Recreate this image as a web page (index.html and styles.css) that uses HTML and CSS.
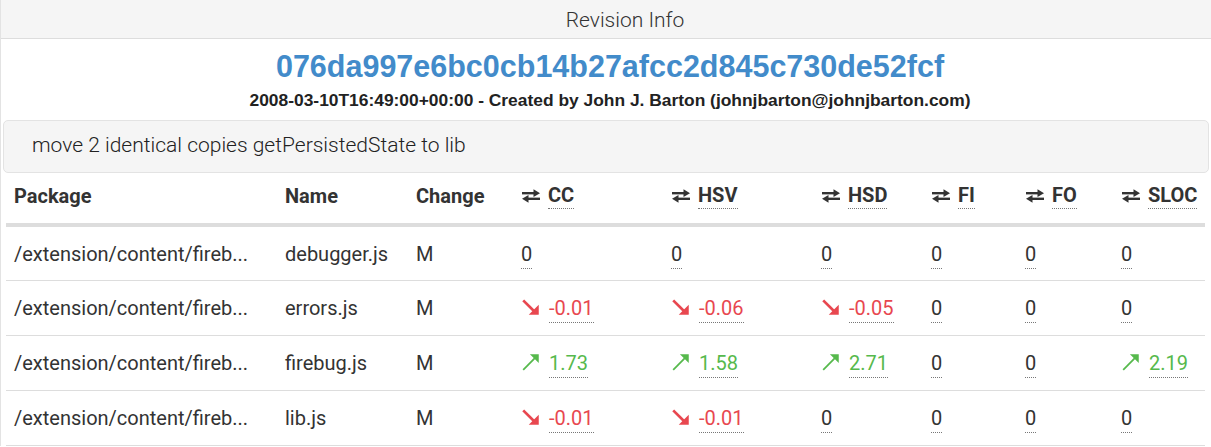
FILE: index.html
```html
<!DOCTYPE html>
<html>
<head>
<meta charset="utf-8">
<link rel="stylesheet" href="styles.css">
</head>
<body>
<div class="panel">
  <div class="panel-heading">Revision Info</div>
  <div class="panel-body">
    <h1 class="hash">076da997e6bc0cb14b27afcc2d845c730de52fcf</h1>
    <div class="meta">2008-03-10T16:49:00+00:00 - Created by John J. Barton (johnjbarton@johnjbarton.com)</div>
    <div class="well">move 2 identical copies getPersistedState to lib</div>
    <table class="files">
      <colgroup>
        <col class="c-pkg"><col class="c-name"><col class="c-chg"><col class="c-cc"><col class="c-hsv"><col class="c-hsd"><col class="c-fi"><col class="c-fo"><col class="c-sloc">
      </colgroup>
      <thead>
        <tr>
          <th>Package</th><th>Name</th><th>Change</th>
          <th><span class="sort"><svg class="xfer" viewBox="0 0 20 14" width="20" height="14"><path d="M1 4.2h13" stroke="#333" stroke-width="2.4"/><path d="M12.5 0.3l6.5 3.9-6.5 3.9z" fill="#333"/><path d="M19 9.8H6" stroke="#333" stroke-width="2.4"/><path d="M7.5 5.9l-6.5 3.9 6.5 3.9z" fill="#333"/></svg><abbr>CC</abbr></span></th>
          <th><span class="sort"><svg class="xfer" viewBox="0 0 20 14" width="20" height="14"><path d="M1 4.2h13" stroke="#333" stroke-width="2.4"/><path d="M12.5 0.3l6.5 3.9-6.5 3.9z" fill="#333"/><path d="M19 9.8H6" stroke="#333" stroke-width="2.4"/><path d="M7.5 5.9l-6.5 3.9 6.5 3.9z" fill="#333"/></svg><abbr>HSV</abbr></span></th>
          <th><span class="sort"><svg class="xfer" viewBox="0 0 20 14" width="20" height="14"><path d="M1 4.2h13" stroke="#333" stroke-width="2.4"/><path d="M12.5 0.3l6.5 3.9-6.5 3.9z" fill="#333"/><path d="M19 9.8H6" stroke="#333" stroke-width="2.4"/><path d="M7.5 5.9l-6.5 3.9 6.5 3.9z" fill="#333"/></svg><abbr>HSD</abbr></span></th>
          <th><span class="sort"><svg class="xfer" viewBox="0 0 20 14" width="20" height="14"><path d="M1 4.2h13" stroke="#333" stroke-width="2.4"/><path d="M12.5 0.3l6.5 3.9-6.5 3.9z" fill="#333"/><path d="M19 9.8H6" stroke="#333" stroke-width="2.4"/><path d="M7.5 5.9l-6.5 3.9 6.5 3.9z" fill="#333"/></svg><abbr>FI</abbr></span></th>
          <th><span class="sort"><svg class="xfer" viewBox="0 0 20 14" width="20" height="14"><path d="M1 4.2h13" stroke="#333" stroke-width="2.4"/><path d="M12.5 0.3l6.5 3.9-6.5 3.9z" fill="#333"/><path d="M19 9.8H6" stroke="#333" stroke-width="2.4"/><path d="M7.5 5.9l-6.5 3.9 6.5 3.9z" fill="#333"/></svg><abbr>FO</abbr></span></th>
          <th><span class="sort"><svg class="xfer" viewBox="0 0 20 14" width="20" height="14"><path d="M1 4.2h13" stroke="#333" stroke-width="2.4"/><path d="M12.5 0.3l6.5 3.9-6.5 3.9z" fill="#333"/><path d="M19 9.8H6" stroke="#333" stroke-width="2.4"/><path d="M7.5 5.9l-6.5 3.9 6.5 3.9z" fill="#333"/></svg><abbr>SLOC</abbr></span></th>
        </tr>
      </thead>
      <tbody>
        <tr>
          <td>/extension/content/fireb...</td><td>debugger.js</td><td>M</td>
          <td><abbr>0</abbr></td><td><abbr>0</abbr></td><td><abbr>0</abbr></td><td><abbr>0</abbr></td><td><abbr>0</abbr></td><td><abbr>0</abbr></td>
        </tr>
        <tr>
          <td>/extension/content/fireb...</td><td>errors.js</td><td>M</td>
          <td class="down"><svg class="trend" viewBox="0 0 18 18" width="18" height="18"><path d="M2 3L13 14" stroke="currentColor" stroke-width="2.4"/><path d="M16 7v9H7z" fill="currentColor"/></svg><abbr>-0.01</abbr></td>
          <td class="down"><svg class="trend" viewBox="0 0 18 18" width="18" height="18"><path d="M2 3L13 14" stroke="currentColor" stroke-width="2.4"/><path d="M16 7v9H7z" fill="currentColor"/></svg><abbr>-0.06</abbr></td>
          <td class="down"><svg class="trend" viewBox="0 0 18 18" width="18" height="18"><path d="M2 3L13 14" stroke="currentColor" stroke-width="2.4"/><path d="M16 7v9H7z" fill="currentColor"/></svg><abbr>-0.05</abbr></td>
          <td><abbr>0</abbr></td><td><abbr>0</abbr></td><td><abbr>0</abbr></td>
        </tr>
        <tr>
          <td>/extension/content/fireb...</td><td>firebug.js</td><td>M</td>
          <td class="up"><svg class="trend" viewBox="0 0 18 18" width="18" height="18"><path d="M2 16L14 4" stroke="currentColor" stroke-width="1.6"/><path d="M8 2h8v8z" fill="currentColor"/></svg><abbr>1.73</abbr></td>
          <td class="up"><svg class="trend" viewBox="0 0 18 18" width="18" height="18"><path d="M2 16L14 4" stroke="currentColor" stroke-width="1.6"/><path d="M8 2h8v8z" fill="currentColor"/></svg><abbr>1.58</abbr></td>
          <td class="up"><svg class="trend" viewBox="0 0 18 18" width="18" height="18"><path d="M2 16L14 4" stroke="currentColor" stroke-width="1.6"/><path d="M8 2h8v8z" fill="currentColor"/></svg><abbr>2.71</abbr></td>
          <td><abbr>0</abbr></td><td><abbr>0</abbr></td>
          <td class="up"><svg class="trend" viewBox="0 0 18 18" width="18" height="18"><path d="M2 16L14 4" stroke="currentColor" stroke-width="1.6"/><path d="M8 2h8v8z" fill="currentColor"/></svg><abbr>2.19</abbr></td>
        </tr>
        <tr>
          <td>/extension/content/fireb...</td><td>lib.js</td><td>M</td>
          <td class="down"><svg class="trend" viewBox="0 0 18 18" width="18" height="18"><path d="M2 3L13 14" stroke="currentColor" stroke-width="2.4"/><path d="M16 7v9H7z" fill="currentColor"/></svg><abbr>-0.01</abbr></td>
          <td class="down"><svg class="trend" viewBox="0 0 18 18" width="18" height="18"><path d="M2 3L13 14" stroke="currentColor" stroke-width="2.4"/><path d="M16 7v9H7z" fill="currentColor"/></svg><abbr>-0.01</abbr></td>
          <td><abbr>0</abbr></td><td><abbr>0</abbr></td><td><abbr>0</abbr></td><td><abbr>0</abbr></td>
        </tr>
      </tbody>
    </table>
  </div>
</div>
</body>
</html>
```

FILE: styles.css
```css
* { box-sizing: border-box; }
html, body { margin: 0; padding: 0; background: #fff; }
body {
  font-family: Roboto, "Liberation Sans", sans-serif;
  color: #333;
  width: 1211px;
  overflow: hidden;
}
.panel { border-left: 1px solid #e3e3e3; }
.panel-heading {
  height: 39px;
  background: #f5f5f5;
  border-bottom: 1px solid #ddd;
  text-align: center;
  padding-left: 38px;
  font-size: 21px;
  font-weight: 300;
  line-height: 41px;
  color: #333;
}
.panel-body { padding: 0 2px; }
.hash {
  margin: 10px 0 0;
  padding-left: 8px;
  text-align: center;
  font-family: "Liberation Sans", Arial, sans-serif;
  font-weight: bold;
  font-size: 30.5px;
  line-height: 34px;
  color: #428bca;
}
.meta {
  text-align: center;
  padding-left: 8px;
  font-family: "Liberation Sans", Arial, sans-serif;
  font-weight: bold;
  font-size: 17.4px;
  line-height: 20px;
  margin-top: 7px;
  color: #222;
}
.well {
  margin-top: 10px;
  height: 53px;
  background: #f5f5f5;
  border: 1px solid #e3e3e3;
  border-radius: 5px;
  padding-left: 28px;
  font-size: 21px;
  font-weight: 300;
  line-height: 49px;
  color: #222;
}
.files {
  margin-left: 3px;
  border-collapse: collapse;
  table-layout: fixed;
  width: 1199px;
}
.c-pkg { width: 271px; }
.c-name { width: 131px; }
.c-chg { width: 105px; }
.c-cc { width: 150px; }
.c-hsv { width: 150px; }
.c-hsd { width: 110px; }
.c-fi { width: 94px; }
.c-fo { width: 96px; }
.c-sloc { width: 92px; }
.files th {
  text-align: left;
  font-size: 20px;
  font-weight: bold;
  height: 52px;
  padding: 0 8px 5px;
  border-bottom: 4px solid #ddd;
  color: #333;
  white-space: nowrap;
}
.files td {
  font-size: 20px;
  height: 55px;
  padding: 1px 8px 0;
  border-bottom: 1px solid #ddd;
  white-space: nowrap;
  color: #333;
}
.sort { display: inline-flex; align-items: center; gap: 7px; }
.xfer { display: block; width: 20px; height: 14px; }
abbr {
  text-decoration: none;
  border-bottom: 1px dotted #777;
  padding-bottom: 2px;
}
th abbr { padding-bottom: 1px; }
.trend { vertical-align: -2px; margin-right: 8px; width: 20px; height: 20px; }
.down { color: #e8474f !important; }
.up { color: #56b94c !important; }
.down abbr, .up abbr { color: inherit; }
```
